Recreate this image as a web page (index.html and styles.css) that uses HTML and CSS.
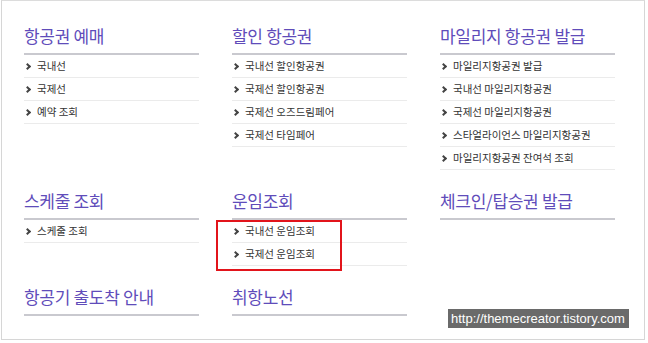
FILE: index.html
```html
<!DOCTYPE html>
<html>
<head>
	<meta charset="UTF-8">
	<title>항공권 메뉴</title>
	<link rel="stylesheet" href="styles.css">
</head>
<body>
	<div class="frame">
		<div class="menu">
			<div class="section">
				<h3>항공권 예매</h3>
				<ul>
					<li>국내선</li>
					<li>국제선</li>
					<li>예약 조회</li>
				</ul>
			</div>
			<div class="section">
				<h3>할인 항공권</h3>
				<ul>
					<li>국내선 할인항공권</li>
					<li>국제선 할인항공권</li>
					<li>국제선 오즈드림페어</li>
					<li>국제선 타임페어</li>
				</ul>
			</div>
			<div class="section">
				<h3>마일리지 항공권 발급</h3>
				<ul>
					<li>마일리지항공권 발급</li>
					<li>국내선 마일리지항공권</li>
					<li>국제선 마일리지항공권</li>
					<li>스타얼라이언스 마일리지항공권</li>
					<li>마일리지항공권 잔여석 조회</li>
				</ul>
			</div>

			<div class="section">
				<h3>스케줄 조회</h3>
				<ul>
					<li>스케줄 조회</li>
				</ul>
			</div>
			<div class="section">
				<h3>운임조회</h3>
				<ul class="marked">
					<li>국내선 운임조회</li>
					<li>국제선 운임조회</li>
				</ul>
			</div>
			<div class="section">
				<h3>체크인/탑승권 발급</h3>
			</div>

			<div class="section">
				<h3>항공기 출도착 안내</h3>
			</div>
			<div class="section">
				<h3>취항노선</h3>
			</div>
		</div>
		<div class="watermark">http://themecreator.tistory.com</div>
	</div>
</body>
</html>
```

FILE: styles.css
```css
* {
	box-sizing: border-box;
}

body {
	margin: 0;
	background: #fff;
	font-family: "Noto Sans CJK KR", "Liberation Sans", sans-serif;
}

.frame {
	position: relative;
	margin-left: 1px;
	width: 644px;
	height: 340px;
	border: 1px solid #d6d6d6;
	border-top-color: #dcdcdc;
}

.menu {
	display: grid;
	grid-template-columns: repeat(3, 175px);
	column-gap: 33px;
	row-gap: 21px;
	padding: 25px 0 0 22px;
	align-items: start;
}

.section h3 {
	margin: 0;
	padding-bottom: 7px;
	height: 29px;
	font-size: 17px;
	line-height: 20px;
	font-weight: normal;
	color: #604cba;
	border-bottom: 2px solid #c9c9cf;
	letter-spacing: -0.3px;
}

.section ul {
	margin: 0;
	padding: 0;
	list-style: none;
}

.section li {
	position: relative;
	height: 23px;
	padding-left: 13px;
	font-size: 10.5px;
	line-height: 22px;
	color: #333;
	border-bottom: 1px solid #ebebeb;
}

.section li::before {
	content: "";
	position: absolute;
	left: 1px;
	top: 9px;
	width: 3px;
	height: 3px;
	border-top: 2px solid #444;
	border-right: 2px solid #444;
	transform: rotate(45deg);
}

.marked {
	position: relative;
}

/* red highlight box */
.marked::after {
	content: "";
	position: absolute;
	left: -16px;
	top: 0;
	width: 122px;
	height: 47px;
	border: 2px solid #e2141b;
}

.watermark {
	position: absolute;
	left: 446px;
	top: 308px;
	width: 181px;
	height: 19px;
	padding-left: 3px;
	background: #6a6a6a;
	color: #fff;
	font-family: "Liberation Sans", sans-serif;
	font-size: 13px;
	line-height: 19px;
	white-space: nowrap;
	overflow: hidden;
}
```
